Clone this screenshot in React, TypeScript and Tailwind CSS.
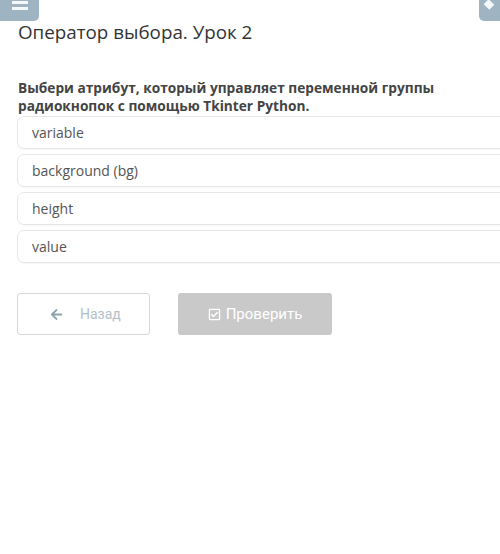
import { FaArrowLeft, FaRegCheckSquare } from "react-icons/fa";

const OPTIONS = ["variable", "background (bg)", "height", "value"];

export default function App() {
  return (
    <div className="relative w-[500px] h-[554px] bg-white overflow-hidden font-['Open_Sans',sans-serif]">
      {/* top corner buttons */}
      <div className="absolute left-0 top-0 w-[39px] h-[21px] bg-[#9fb4c3] rounded-br-[5px] flex flex-col items-center pt-[1px] gap-[3px]">
        <div className="w-[16px] h-[3px] bg-white/90" />
        <div className="w-[16px] h-[3px] bg-white/90" />
      </div>
      <div className="absolute right-0 top-0 w-[21px] h-[21px] bg-[#9fb4c3] rounded-bl-[5px]">
        <div className="absolute left-[6px] top-[1px] w-[8px] h-[7px] bg-white/90 rotate-45" />
      </div>

      <div className="pl-[17px] pt-[20px]">
        <h1 className="text-[18.8px] leading-[24px] text-[#333] pl-[1px]">Оператор выбора. Урок 2</h1>

        <p className="mt-[35px] pl-[1px] text-[13.7px] leading-[18px] font-bold text-[#444]">
          Выбери атрибут, который управляет переменной группы
          <br />
          радиокнопок с помощью Tkinter Python.
        </p>

        <div className="mt-[1px] flex flex-col gap-[5px] w-[495px]">
          {OPTIONS.map((o) => (
            <div
              key={o}
              className="h-[33px] border border-[#e6e6e6] rounded-[7px] flex items-center pl-[14px] text-[14px] text-[#555] shadow-[0_1px_1px_rgba(0,0,0,0.03)]"
            >
              {o}
            </div>
          ))}
        </div>

        <div className="mt-[30px] flex gap-[28px] font-['Roboto',sans-serif]">
          <button className="w-[133px] h-[42px] border border-[#d4d9dc] rounded-[3px] bg-white flex items-center pl-[32px] gap-[17px] text-[14px] text-[#b3c0c8]">
            <FaArrowLeft size={13} className="text-[#8fa3ae]" />
            Назад
          </button>
          <button className="w-[154px] h-[42px] rounded-[3px] bg-[#c9c9c9] flex items-center justify-center gap-[5px] text-[15px] text-white">
            <FaRegCheckSquare size={13} />
            Проверить
          </button>
        </div>
      </div>
    </div>
  );
}
